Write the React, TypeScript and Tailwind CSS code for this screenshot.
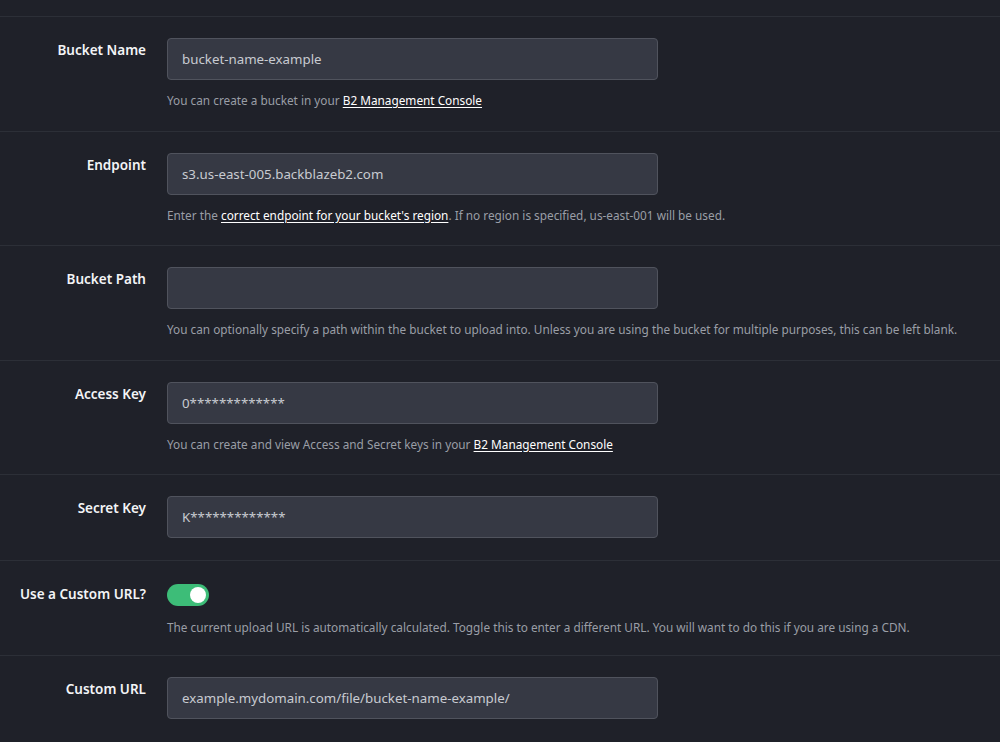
import React from "react";

interface Field {
  label: string;
  value?: string;
  help?: React.ReactNode;
}

const linkCls = "text-white underline underline-offset-2";

const fields: Field[] = [
  {
    label: "Bucket Name",
    value: "bucket-name-example",
    help: (
      <>
        You can create a bucket in your <a className={linkCls}>B2 Management Console</a>
      </>
    ),
  },
  {
    label: "Endpoint",
    value: "s3.us-east-005.backblazeb2.com",
    help: (
      <>
        Enter the <a className={linkCls}>correct endpoint for your bucket's region</a>. If no region is
        specified, us-east-001 will be used.
      </>
    ),
  },
  {
    label: "Bucket Path",
    value: "",
    help: "You can optionally specify a path within the bucket to upload into. Unless you are using the bucket for multiple purposes, this can be left blank.",
  },
  {
    label: "Access Key",
    value: "0*************",
    help: (
      <>
        You can create and view Access and Secret keys in your{" "}
        <a className={linkCls}>B2 Management Console</a>
      </>
    ),
  },
  { label: "Secret Key", value: "K*************" },
];

function Row({ label, children }: { label: string; children: React.ReactNode }) {
  return (
    <div className="flex border-t border-[#2c2f37]">
      <div className="w-[146px] shrink-0 text-right text-[13.5px] leading-5 font-semibold text-[#f3f4f6] pt-[23px]">
        {label}
      </div>
      <div className="ml-[21px] flex-1">{children}</div>
    </div>
  );
}

function Input({ value }: { value?: string }) {
  return (
    <input
      readOnly
      value={value}
      className="block w-[491px] h-[42px] rounded-[4px] border border-[#50535d] bg-[#363944] px-[14px] text-[13.3px] text-[#c8cbd1] outline-none"
    />
  );
}

export default function App() {
  return (
    <div
      className="min-h-[742px] bg-[#1f2129] pt-[16px]"
      style={{ fontFamily: '"Noto Sans", "Open Sans", sans-serif' }}
    >
      {fields.map((f) => (
        <Row key={f.label} label={f.label}>
          <div className={`pt-[21px] ${f.help ? "pb-[22.5px]" : "pb-[22px]"}`}>
            <Input value={f.value} />
            {f.help && (
              <p className="mt-[12px] text-[11.8px] leading-4 text-[#9a9ea6]">{f.help}</p>
            )}
          </div>
        </Row>
      ))}

      <Row label="Use a Custom URL?">
        <div className="pt-[23px] pb-[20px]">
          <button className="relative block h-[22px] w-[42px] rounded-full bg-[#3dbd78]">
            <span className="absolute right-[3px] top-[3px] h-4 w-4 rounded-full bg-white" />
          </button>
          <p className="mt-[13px] text-[11.8px] leading-4 text-[#9a9ea6]">
            The current upload URL is automatically calculated. Toggle this to enter a different URL. You
            will want to do this if you are using a CDN.
          </p>
        </div>
      </Row>

      <Row label="Custom URL">
        <div className="pt-[21px] pb-[22px]">
          <Input value="example.mydomain.com/file/bucket-name-example/" />
        </div>
      </Row>
    </div>
  );
}
